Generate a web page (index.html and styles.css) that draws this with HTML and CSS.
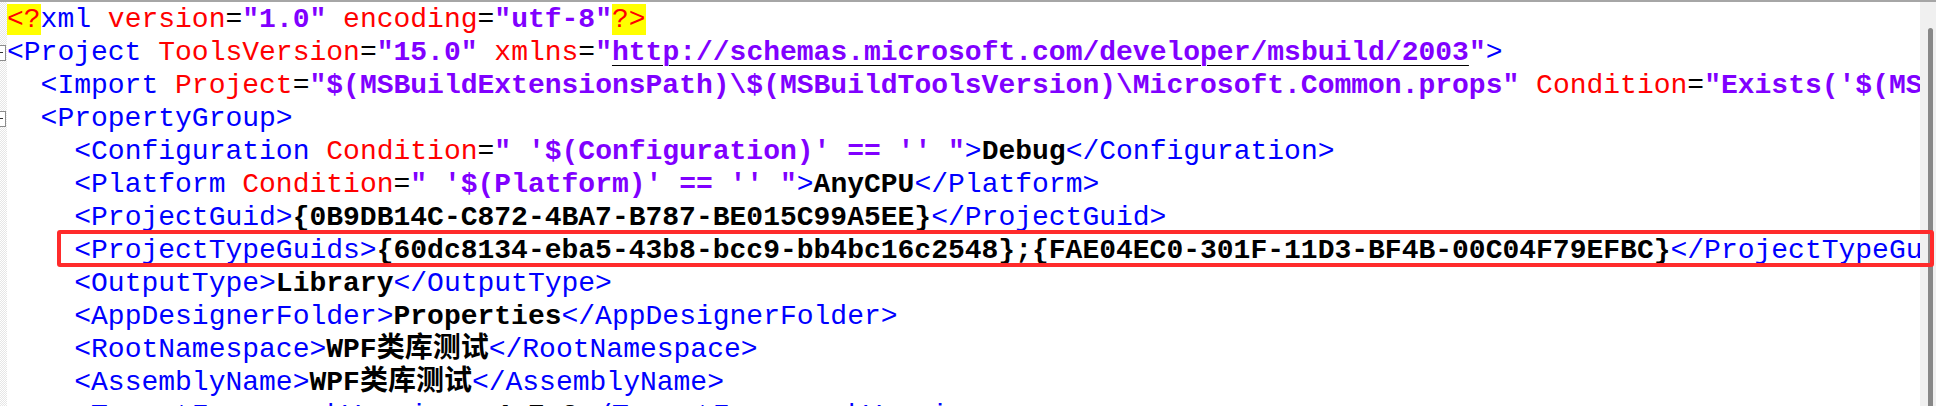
FILE: index.html
```html
<!DOCTYPE html>
<html>
<head>
<meta charset="utf-8">
<link rel="stylesheet" href="styles.css">
</head>
<body>
<div class="editor">
  <div class="gutter">
    <div class="gcell"></div>
    <div class="gcell"><span class="fold"></span></div>
    <div class="gcell"></div>
    <div class="gcell"><span class="fold"></span></div>
  </div>
  <div class="code">
<div class="line"><span class="pi">&lt;?</span><span class="t">xml</span> <span class="a">version</span>=<span class="v">"1.0"</span> <span class="a">encoding</span>=<span class="v">"utf-8"</span><span class="pi">?&gt;</span></div>
<div class="line"><span class="t">&lt;Project</span> <span class="a">ToolsVersion</span>=<span class="v">"15.0"</span> <span class="a">xmlns</span>=<span class="v">"<span class="u">http://schemas.microsoft.com/developer/msbuild/2003</span>"</span><span class="t">&gt;</span></div>
<div class="line">  <span class="t">&lt;Import</span> <span class="a">Project</span>=<span class="v">"$(MSBuildExtensionsPath)\$(MSBuildToolsVersion)\Microsoft.Common.props"</span> <span class="a">Condition</span>=<span class="v">"Exists('$(MSBuildExtensionsPath)\$(MSBuildToolsVersion)\Microsoft.Common.props')"</span> <span class="t">/&gt;</span></div>
<div class="line">  <span class="t">&lt;PropertyGroup&gt;</span></div>
<div class="line">    <span class="t">&lt;Configuration</span> <span class="a">Condition</span>=<span class="v">" '$(Configuration)' == '' "</span><span class="t">&gt;</span><span class="x">Debug</span><span class="t">&lt;/Configuration&gt;</span></div>
<div class="line">    <span class="t">&lt;Platform</span> <span class="a">Condition</span>=<span class="v">" '$(Platform)' == '' "</span><span class="t">&gt;</span><span class="x">AnyCPU</span><span class="t">&lt;/Platform&gt;</span></div>
<div class="line">    <span class="t">&lt;ProjectGuid&gt;</span><span class="x">{0B9DB14C-C872-4BA7-B787-BE015C99A5EE}</span><span class="t">&lt;/ProjectGuid&gt;</span></div>
<div class="line">    <span class="t">&lt;ProjectTypeGuids&gt;</span><span class="x">{60dc8134-eba5-43b8-bcc9-bb4bc16c2548};{FAE04EC0-301F-11D3-BF4B-00C04F79EFBC}</span><span class="t">&lt;/ProjectTypeGuids&gt;</span></div>
<div class="line">    <span class="t">&lt;OutputType&gt;</span><span class="x">Library</span><span class="t">&lt;/OutputType&gt;</span></div>
<div class="line">    <span class="t">&lt;AppDesignerFolder&gt;</span><span class="x">Properties</span><span class="t">&lt;/AppDesignerFolder&gt;</span></div>
<div class="line">    <span class="t">&lt;RootNamespace&gt;</span><span class="x">WPF<span class="cjk">类库测试</span></span><span class="t">&lt;/RootNamespace&gt;</span></div>
<div class="line">    <span class="t">&lt;AssemblyName&gt;</span><span class="x">WPF<span class="cjk">类库测试</span></span><span class="t">&lt;/AssemblyName&gt;</span></div>
<div class="line">    <span class="t">&lt;TargetFrameworkVersion&gt;</span><span class="x">v4.7.2</span><span class="t">&lt;/TargetFrameworkVersion&gt;</span></div>
  </div>
  <div class="scrollbar"><div class="thumb"></div></div>
  <div class="mark"></div>
</div>
</body>
</html>
```
FILE: styles.css
```css
html, body {
  margin: 0;
  padding: 0;
  background: #ffffff;
  overflow: hidden;
}

.editor {
  position: relative;
  width: 1936px;
  height: 406px;
  box-sizing: border-box;
  border-top: 2px solid #a6a6a6;
  display: flex;
  overflow: hidden;
  background: #ffffff;
}

.gutter {
  width: 7px;
  flex: none;
  padding-top: 1px;
  background-color: #ffffff;
  background-image: repeating-conic-gradient(#e6e6e6 0% 25%, #ffffff 0% 50%);
  background-size: 2px 2px;
}

.gcell {
  height: 33px;
  display: flex;
  align-items: center;
  justify-content: flex-end;
}

.fold {
  width: 16px;
  height: 16px;
  margin-right: 1px;
  flex: none;
  box-sizing: border-box;
  border: 1px solid #8c8c8c;
  background: #ffffff;
  display: flex;
  align-items: center;
  justify-content: center;
}

.fold::before {
  content: "";
  width: 9px;
  height: 1px;
  background: #333333;
}

.code {
  flex: 1;
  min-width: 0;
  overflow: hidden;
  padding-top: 1px;
  font-family: "Liberation Mono", "Noto Sans CJK SC", monospace;
  font-size: 28px;
  line-height: 33px;
  color: #000000;
}

.line {
  white-space: pre;
  height: 33px;
}

.t { color: #0000ff; }
.a { color: #ff0000; }
.v { color: #8000ff; font-weight: bold; }
.x { color: #000000; font-weight: bold; }
.pi { color: #ff0000; background: #ffff00; }
.u { text-decoration: underline; text-decoration-color: #000000; text-decoration-thickness: 1px; text-underline-offset: 5px; }

.cjk {
  font-family: "Noto Sans CJK SC", sans-serif;
  font-weight: bold;
  line-height: 0;
}

.scrollbar {
  width: 16px;
  flex: none;
  background: #f0f0f0;
  display: flex;
  justify-content: flex-end;
  padding-top: 26px;
  padding-right: 3px;
  box-sizing: border-box;
}

.thumb {
  width: 5px;
  height: 100%;
  background: #888888;
  border-radius: 3px 3px 0 0;
}

.mark {
  position: absolute;
  left: 57px;
  top: 228px;
  width: 1877px;
  height: 37px;
  box-sizing: border-box;
  border: 4px solid #ff2b2b;
  border-radius: 3px;
}
```
